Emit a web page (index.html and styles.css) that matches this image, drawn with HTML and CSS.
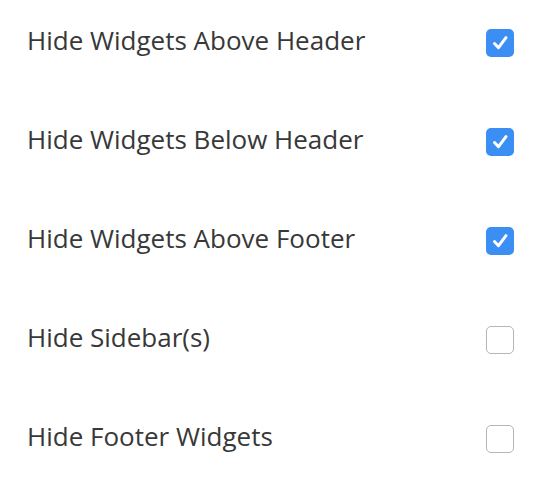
FILE: index.html
```html
<!DOCTYPE html>
<html lang="en">
<head>
    <meta charset="UTF-8">
    <title>Widget Settings</title>
    <link rel="stylesheet" href="styles.css">
</head>
<body>
    <div class="settings">
        <div class="row">
            <span class="label">Hide Widgets Above Header</span>
            <span class="box checked"><svg viewBox="0 0 28 28"><path d="M8.5 14.5l4 4.2 7.5-10"/></svg></span>
        </div>
        <div class="row">
            <span class="label">Hide Widgets Below Header</span>
            <span class="box checked"><svg viewBox="0 0 28 28"><path d="M8.5 14.5l4 4.2 7.5-10"/></svg></span>
        </div>
        <div class="row">
            <span class="label">Hide Widgets Above Footer</span>
            <span class="box checked"><svg viewBox="0 0 28 28"><path d="M8.5 14.5l4 4.2 7.5-10"/></svg></span>
        </div>
        <div class="row">
            <span class="label">Hide Sidebar(s)</span>
            <span class="box"></span>
        </div>
        <div class="row">
            <span class="label">Hide Footer Widgets</span>
            <span class="box"></span>
        </div>
    </div>
</body>
</html>
```

FILE: styles.css
```css
body {
    margin: 0;
    background: #fff;
    font-family: 'Open Sans', sans-serif;
}
.settings {
    padding: 22px 22px 0 27px;
}
.row {
    display: flex;
    align-items: center;
    justify-content: space-between;
    height: 40px;
    margin-bottom: 59px;
}
.row:last-child {
    margin-bottom: 0;
}
.label {
    font-size: 26px;
    line-height: 36px;
    color: #383838;
    margin-bottom: 4px;
}
.box {
    width: 26px;
    height: 26px;
    border: 1px solid #b5b5b5;
    border-radius: 5px;
    background: #fff;
    margin-top: 2px;
    display: flex;
}
.box.checked {
    width: 28px;
    height: 28px;
    border: none;
    background: #3b8ef3;
}
.box svg {
    width: 28px;
    height: 28px;
}
.box path {
    fill: none;
    stroke: #fff;
    stroke-width: 3;
    stroke-linecap: round;
    stroke-linejoin: round;
}
```
